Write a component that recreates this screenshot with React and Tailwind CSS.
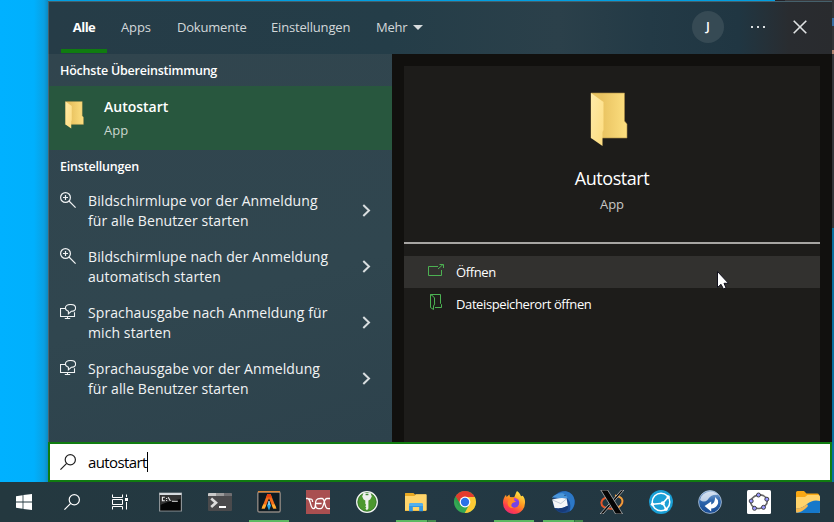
import React from "react";

const FolderIcon = ({ className }) => (
  <svg className={className} viewBox="0 0 38 55" preserveAspectRatio="none">
    <defs>
      <linearGradient id="fb" x1="0" x2="1">
        <stop offset="0.3" stopColor="#e9c361" />
        <stop offset="1" stopColor="#fddf80" />
      </linearGradient>
      <linearGradient id="ff" x1="0" x2="1" y1="0" y2="1">
        <stop offset="0" stopColor="#ffeba8" />
        <stop offset="1" stopColor="#fddc7f" />
      </linearGradient>
    </defs>
    <path d="M1 1H34.5V29L37 32V46H1Z" fill="url(#fb)" stroke="#a98a45" strokeWidth=".6" />
    <path d="M1 1L13.5 10V38L12.5 40V54L1 46Z" fill="url(#ff)" />
  </svg>
);

const ZoomIcon = () => (
  <svg className="block size-4" viewBox="0 0 16 16" fill="none" stroke="#f1f3f4" strokeWidth="1.2">
    <circle cx="5.5" cy="5.5" r="4.9" />
    <path d="M9 9L15.6 15.6M5.5 3V8M3 5.5H8" />
  </svg>
);

const NarratorIcon = () => (
  <svg className="block size-4" viewBox="0 0 16 16" fill="none" stroke="#f1f3f4" strokeWidth="1.1">
    <path d="M5 4.5H.5V12.5H14.5V8.2M7.5 12.5V14.5M4.8 14.5H10.2" />
    <path d="M8.4 9.8V7.2C6.4 6.6 5.4 5.4 5.4 4C5.4 2 7.6.5 10.5.5S15.6 2 15.6 4S13.4 7.2 11.3 7.3Z" />
  </svg>
);

const SearchIcon = ({ color, w = 1.2 }) => (
  <svg className="block size-4" viewBox="0 0 16 16" fill="none" stroke={color} strokeWidth={w}>
    <circle cx="10.3" cy="5.7" r="5.1" />
    <path d="M6.7 9.3L.4 15.6" />
  </svg>
);

const settings = [
  { icon: ZoomIcon, a: "Bildschirmlupe vor der Anmeldung", b: "für alle Benutzer starten" },
  { icon: ZoomIcon, a: "Bildschirmlupe nach der Anmeldung", b: "automatisch starten" },
  { icon: NarratorIcon, a: "Sprachausgabe nach Anmeldung für", b: "mich starten" },
  { icon: NarratorIcon, a: "Sprachausgabe vor der Anmeldung", b: "für alle Benutzer starten" },
];

const svg = (children, key) => (
  <svg key={key} className="block size-6" viewBox="0 0 24 24">{children}</svg>
);

const apps = [
  { name: "cmd", icon: svg(<>
    <rect x="0" y="2.5" width="23" height="19" fill="#8b9296" />
    <rect x=".5" y="3" width="22" height="2" fill="#d5dade" />
    <rect x="1.2" y="5" width="20.6" height="15.6" fill="#050505" />
    <path d="M1.2 5H21.8V9Q9 11 1.2 15Z" fill="#333" />
    <path d="M5.8 7.2H3.4V10.8H5.8M7.6 8V8.9M7.6 10V10.9M9.2 7.2L11.4 11M12.8 11.2H18.8" fill="none" stroke="#eee" strokeWidth="1.1" />
  </>) },
  { name: "terminal", icon: svg(<>
    <rect x="0" y="3" width="24" height="18" rx="1" fill="#4a4a4c" />
    <path d="M0 6V4Q0 3 1 3H8V6Z" fill="#c9c9c9" /><path d="M8 3H16V6H8Z" fill="#9a9a9a" /><path d="M16 3H23Q24 3 24 4V6H16Z" fill="#6f6f72" />
    <path d="M3.2 8.5L8 12.7L3.2 17" fill="none" stroke="#dcdcdc" strokeWidth="2.6" />
    <path d="M11 17H18" stroke="#fff" strokeWidth="2" />
  </>) },
  { name: "alacritty", bar: "one", icon: svg(<>
    <rect x=".8" y="2" width="22.4" height="20" rx="1.5" fill="#0e1a21" stroke="#8b8580" strokeWidth="1.4" />
    <path d="M1 1.7H23" stroke="#f08a2c" strokeWidth="1.2" />
    <path d="M10.4 4H13.6L19.4 18.5H16.2L12 8.3L7.8 18.5H4.6Z" fill="#f46d1b" />
    <path d="M10.4 4H13.6L15 7.5H9Z" fill="#e8400f" />
    <path d="M6.2 14.6L4.6 18.5H7.8L9.4 14.6ZM17.8 14.6L19.4 18.5H16.2L14.6 14.6Z" fill="#ffad32" />
    <path d="M12 10.8L14 15.5L12 20.5L10 15.5Z" fill="#25a5e8" /><path d="M12 11V15" stroke="#d7f3ff" />
  </>) },
  { name: "neo", icon: svg(<>
    <rect width="24" height="24" fill="#a94f50" />
    <path d="M0 8.5H1.5C5 8.5 4 18.7 7.6 18.7C9.3 18.7 9.3 17 9.4 14.5C9.6 10.5 10 8.5 14.5 8.5H16C19.5 8.5 18 18.7 22 18.7H24M3 8.8C6.5 8.8 6.3 9.5 6.6 12M9.5 13.5H15.6M9.4 14.5C9.6 17.5 10.5 18.7 12.5 18.7H14.5C18.5 18.7 17 8.5 21 8.5H24" fill="none" stroke="#fff" strokeWidth="1.3" />
  </>) },
  { name: "keepass", icon: svg(<>
    <circle cx="12" cy="12" r="10.2" fill="#4c982f" stroke="#f2f4f2" strokeWidth="1.5" />
    <circle cx="12" cy="12" r="9.2" fill="none" stroke="#2b6c2a" strokeWidth=".6" />
    <path d="M8.4 3H15.6L16.8 6.5L15.2 9.6L13.4 10.5V18.5L12 20.3L10.4 18.7L11.3 17.5L10.2 16.3L11.2 15L10.3 13.8V10.5L8.6 9.6L7.2 6.5Z" fill="#eef0ee" />
    <path d="M10.6 4.5H13.4" stroke="#3c8730" strokeWidth="1.4" />
  </>) },
  { name: "explorer", bar: "stack", icon: svg(<>
    <path d="M1 3.5Q1 3 1.5 3H9.5L11 4.4H22V21H1Z" fill="#e9a922" />
    <path d="M1 6H10.5L12 4.3H22Q22.7 4.3 22.7 5V20.4H1Z" fill="#ffd56b" />
    <path d="M5 21.2V15Q5 13.1 7 13.1H17Q19 13.1 19 15V21.2H15.2V17H8.8V21.2Z" fill="#3497e2" />
    <path d="M5 15Q5 13.1 7 13.1H17Q19 13.1 19 15V16H5Z" fill="#54b0ec" />
  </>) },
  { name: "chrome", icon: svg(<>
    <circle cx="12" cy="12" r="11" fill="#34a853" />
    <path d="M12 12L2.5 6.5A11 11 0 0 1 21.5 6.5Z" fill="#e33b2e" />
    <path d="M12 7H21.8A11 11 0 0 1 11.7 23L16.3 14.5Z" fill="#fcc934" />
    <path d="M2.5 6.5L7.8 14.7L12 12Z" fill="#e33b2e" /><path d="M2.5 6.5L7.6 14.5L6 17L1.5 9Z" fill="#2e9e4d" />
    <circle cx="12" cy="12" r="5.4" fill="#fff" /><circle cx="12" cy="12" r="4.2" fill="#2a72e8" />
  </>) },
  { name: "firefox", bar: "one", icon: svg(<>
    <defs><linearGradient id="fx" x1=".8" y1="0" x2=".2" y2="1"><stop offset="0" stopColor="#fff04a" /><stop offset=".45" stopColor="#ff9320" /><stop offset=".75" stopColor="#ff4048" /><stop offset="1" stopColor="#e8257c" /></linearGradient></defs>
    <path d="M15 1C18 3 18.5 5 19 6.2L20.8 5.8C22.7 8 23.2 10.3 23 13A11 11 0 0 1 1 13C.9 9.8 2 7 4 4.7L4.6 7L7.4 4.6L8 7L12 7.5C13 6 13.4 3.5 15 1Z" fill="url(#fx)" />
    <circle cx="12.2" cy="12.8" r="5" fill="#7542e5" />
    <path d="M8 8.5Q13 5.5 16.5 9.6Q13 8.4 12 10.5Q14 10.8 13.7 11.8L10.5 13Q7.5 16.5 12 18Q6 18.8 5.5 13Q6 10.2 8 8.5Z" fill="#ff8b22" />
    <path d="M12 8Q15 8 16.4 11Q14.8 9.6 12.2 10.3Z" fill="#b53be0" />
  </>) },
  { name: "thunderbird", bar: "stack", icon: svg(<>
    <circle cx="12.8" cy="12" r="11" fill="#1c4a8f" />
    <path d="M4 6Q9 .6 15 1.2Q22.8 3 23.6 10.5Q24 18 18.5 21.5Q21 13 16.5 8.5Q13 5 4 6Z" fill="#2c78c6" />
    <path d="M.8 7.8Q5 2.6 11.5 3.2Q15.5 4.5 16.5 8L9 9Q4 7 .8 7.8Z" fill="#4a96d9" />
    <path d="M1.2 9.6Q8 7.4 15.6 8.4L16.8 15.8Q10 19.5 3.6 18Z" fill="#f6f7f8" />
    <path d="M2 10.2L9.8 13.6L15.4 9" fill="none" stroke="#aebccd" strokeWidth=".8" />
    <path d="M3.6 18Q10 19.5 16.8 15.8Q18 19 14.5 21.5Q8 23.4 3.6 18Z" fill="#173a78" />
    <circle cx="14" cy="5.3" r=".6" fill="#0d2450" />
  </>) },
  { name: "xorg", icon: svg(<>
    <path d="M15 5.5Q24 7 22.2 13Q19.5 19 11 18.8Q1 18 1.4 12.5Q2 8.2 8 7" fill="none" stroke="#e6562a" strokeWidth="2" />
    <path d="M15 5.5Q24 7 22.2 13Q19.5 19 12 18.8" fill="none" stroke="#e6a83d" strokeWidth="1.5" />
    <path d="M21.5 0H24L3 24H0Z" fill="#090909" stroke="#d7d7d7" strokeWidth=".7" />
    <path d="M.8 0H7.6L22.6 24H15.6Z" fill="#050505" stroke="#ccc" strokeWidth=".7" />
  </>) },
  { name: "syncthing", icon: svg(<>
    <circle cx="12" cy="12" r="12" fill="#1a9fd5" />
    <circle cx="12" cy="12" r="8.8" fill="none" stroke="#fff" strokeWidth="1.5" />
    <path d="M3.6 14.2L13.8 13.2L19.3 7M13.8 13.2L17 19.2" fill="none" stroke="#fff" strokeWidth="1.6" />
    <circle cx="13.8" cy="13.2" r="2" fill="#fff" /><circle cx="3.5" cy="14.2" r="1.7" fill="#fff" /><circle cx="19.2" cy="7" r="1.7" fill="#fff" /><circle cx="17" cy="19.2" r="1.7" fill="#fff" />
  </>) },
  { name: "sync", icon: svg(<>
    <defs><linearGradient id="sy" x1="0" y1="0" x2="0" y2="1"><stop offset="0" stopColor="#8eb2d8" /><stop offset=".45" stopColor="#2d66ad" /><stop offset="1" stopColor="#174a93" /></linearGradient></defs>
    <circle cx="12" cy="12" r="11.4" fill="url(#sy)" stroke="#b9cce1" strokeWidth=".8" />
    <path d="M2 10Q3.5 2.5 12 1.5Q18 1.5 20 5Q13 4 9.5 10Q6 13 2 10Z" fill="#f0f4f9" opacity=".75" />
    <path d="M17 7Q21.5 10.5 19.6 14.5Q17.6 18.4 13.2 18.6V21.6L6.6 16L13.2 11.4V14.4Q17.4 13 17 7Z" fill="#fff" />
  </>) },
  { name: "geogebra", icon: svg(<>
    <rect width="24" height="24" rx="1.5" fill="#fff" />
    <ellipse cx="12" cy="11.7" rx="8.3" ry="6.7" transform="rotate(-12 12 11.7)" fill="none" stroke="#666" strokeWidth="1.6" />
    <g fill="#9999ff" stroke="#333" strokeWidth=".9"><circle cx="11.5" cy="5" r="2" /><circle cx="19.8" cy="9.2" r="2" /><circle cx="16.5" cy="17.3" r="2" /><circle cx="7.5" cy="18.3" r="2" /><circle cx="4.2" cy="11" r="2" /></g>
  </>) },
  { name: "files", icon: svg(<>
    <path d="M0 2.5Q0 1 1.5 1H8L10.5 3.5H21.5Q23 3.5 23 5V12H0Z" fill="#f8a814" />
    <path d="M0 8Q0 7 1 7H9L11.5 5H22.5Q24 5 24 6.5V21.5Q24 23 22.5 23H1.5Q0 23 0 21.5Z" fill="#ffd36b" />
    <path d="M0 18Q6 19 11 14Q17 9 24 11V21.5Q24 23 22.5 23H1.5Q0 23 0 21.5Z" fill="#1678ca" />
    <path d="M0 18Q6 19 11 14L12 16Q7 22 1 22.8Q0 22.5 0 21.5Z" fill="#f7b950" />
  </>) },
];

export default function App() {
  return (
    <div className="relative flex h-[522px] w-[834px] flex-col overflow-hidden bg-[#00b0fd] font-['Open_Sans','Noto_Sans',sans-serif]">
      <div className="flex h-[482px]">
        <div className="w-12 shrink-0 bg-[linear-gradient(to_right,#00b1ff_0,#00b0fd_34px,#0aa0e2_44px,#0c8ac2_48px)]" />
        <div className="flex w-[784px] shrink-0 flex-col">
          <div className="flex h-px">
            <div className="w-[727px] bg-[#009fe2]" />
            <div className="w-2.5 bg-[#242329]" />
            <div className="flex-1 bg-[#3a3a3d]" />
          </div>
          {/* Header */}
          <div className="flex h-[53px] border-t border-l border-[#45606b] bg-[linear-gradient(to_right,#263c47_0,#243d48_340px,#2b404a_510px,#233a46_600px,#203642_690px,#292c30_740px,#292b2e_784px)] text-[13px] text-[#d3d8da]">
            <div className="ml-3 flex h-[51px] w-[46px] items-center justify-center border-b-4 border-[#107c10] pt-1 font-bold tracking-[-0.5px] text-white">Alle</div>
            <div className="ml-3.5 flex h-[51px] items-center">
              <span className="w-14 tracking-[-0.1px]">Apps</span>
              <span className="w-[94px] tracking-[-0.2px]">Dokumente</span>
              <span className="w-[105px] tracking-[-0.17px]">Einstellungen</span>
              <span className="w-[37px] tracking-[-0.2px]">Mehr</span>
              <svg className="h-[5px] w-2.5" viewBox="0 0 10 5"><path d="M0 0H10L5 5Z" fill="#d8dcde" /></svg>
            </div>
            <div className="mt-[9px] ml-auto flex size-8 items-center justify-center rounded-full bg-[#364a54] text-[13px] font-semibold text-white">J</div>
            <div className="mt-6 ml-[27px] flex w-4 gap-1">
              <i className="size-0.5 bg-[#dce0e2]" /><i className="size-0.5 bg-[#dce0e2]" /><i className="size-0.5 bg-[#dce0e2]" />
            </div>
            <svg className="mt-[18px] mr-[25px] ml-[26px] size-3.5" viewBox="0 0 14 14"><path d="M.7.7L13.3 13.3M13.3.7L.7 13.3" stroke="#dfe2e3" strokeWidth="1.6" /></svg>
          </div>
          <div className="flex h-[388px]">
            {/* Results */}
            <div className="w-[344px] border-l border-[#4a6672] bg-[linear-gradient(165deg,#31454e,#30464f_60%,#2d424c)] text-white">
              <div className="flex h-8 items-center pt-0.5 pl-[11px] text-[12.5px] font-semibold tracking-[-0.22px]">Höchste Übereinstimmung</div>
              <div className="flex h-16 bg-[#28573e]">
                <FolderIcon className="mt-[15px] ml-4 h-7 w-[19px]" />
                <div className="ml-5 pt-[9px]">
                  <div className="text-sm leading-6 font-semibold">Autostart</div>
                  <div className="text-[13px] leading-[22px] text-[#cbd6cf]">App</div>
                </div>
              </div>
              <div className="flex h-[33px] items-center pt-0.5 pl-[11px] text-[12.5px] font-semibold tracking-[-0.2px]">Einstellungen</div>
              {settings.map(({ icon: Icon, a, b }) => (
                <div key={a} className="flex h-14 pt-2 pl-[11px]">
                  <div className="pt-[1px]"><Icon /></div>
                  <div className="ml-3 w-[274px] text-sm leading-5 tracking-[0.09px] text-[#f1f3f4]">{a}<br />{b}</div>
                  <svg className="mt-[13px] h-[13px] w-2.5" viewBox="0 0 10 13" fill="none"><path d="M1.3 1L7 6.5L1.3 12" stroke="#d8dddf" strokeWidth="2" /></svg>
                </div>
              ))}
            </div>
            {/* Details */}
            <div className="flex-1 bg-[#11100e] px-3 pt-3">
              <div className="h-[376px] bg-[#1d1c1a] text-white">
                <div className="flex h-44 flex-col items-center">
                  <FolderIcon className="mt-[26px] mr-[7px] h-[55px] w-[38px]" />
                  <div className="mt-[17px] text-[18px] leading-7 tracking-[-0.45px]">Autostart</div>
                  <div className="text-[13px] leading-6 text-[#c8c7c5]">App</div>
                </div>
                <div className="h-0.5 bg-[#a7a5a3]" />
                <div className="mt-3 flex h-8 items-center bg-[#32312f] pl-6 text-[13px]">
                  <svg className="mb-1 h-3 w-4" viewBox="0 0 16 12" fill="none" stroke="#4cb152"><path d="M10 2.5H.5V11.5H13.5V6M10 5L15 .5M11.5 .5H15.5V4" /></svg>
                  <span className="ml-3 pt-0.5 tracking-[-0.4px]">Öffnen</span>
                </div>
                <div className="flex h-8 items-center pl-[26px] text-[13px]">
                  <svg className="mb-1 h-4 w-3" viewBox="0 0 12 16" fill="none" stroke="#4cb152"><path d="M.5 .5H10.5V9.5L11.5 10.5V13.5H5M.5 .5V13.5L3.5 15.5V12Q5.3 10 4.5 8V4Q3.5 2 .5 .5" /></svg>
                  <span className="ml-3.5 pt-0.5 tracking-[-0.39px]">Dateispeicherort öffnen</span>
                </div>
              </div>
            </div>
          </div>
          {/* Search field */}
          <div className="flex h-10 items-center border-2 border-[#107c10] bg-white pl-2.5">
            <SearchIcon color="#222" />
            <span className="ml-3 text-[15px] tracking-[-0.6px] text-black">autostart</span>
            <i className="h-5 w-px bg-black" />
          </div>
        </div>
        <div className="flex w-0.5 flex-col bg-[#333438]">
          <div className="h-[18px]" /><div className="h-2 bg-[#376da3]" /><div className="h-6" /><div className="h-1 bg-[#b18370]" /><div className="h-[174px]" />
          <div className="flex-1 bg-[#08709f]" />
        </div>
      </div>
      {/* Taskbar */}
      <div className="flex h-10 bg-[linear-gradient(to_right,#24383f,#233944_50%,#22363f)]">
        <div className="flex w-12 items-center justify-center">
          <svg className="size-4" viewBox="0 0 16 16" fill="#fff"><path d="M0 2.2L6.6 1.2V7.6H0ZM7.4 1.1L16 0V7.6H7.4ZM0 8.4H6.6V14.8L0 13.8ZM7.4 8.4H16V16L7.4 14.9Z" /></svg>
        </div>
        <div className="flex w-12 items-center justify-center"><SearchIcon color="#fff" /></div>
        <div className="flex w-[50px] items-center justify-center pr-0.5">
          <svg className="size-4" viewBox="0 0 16 16" fill="none" stroke="#fff"><path d="M.5 .5V3.5H10.5V.5M.5 15.5V12.5H10.5V15.5M.5 5.5H10.5V10.5H.5ZM14.5 .5V3M14.5 8V15.5" /><rect x="13" y="4" width="3" height="3" fill="#fff" stroke="none" /></svg>
        </div>
        {apps.map((a) => (
          <div key={a.name} className="flex w-[49px] shrink-0 flex-col">
            <div className="h-[38px] pt-2 pl-[13px]">{a.icon}</div>
            {a.bar === "one" && <div className="ml-[5px] h-0.5 w-10 bg-[#5db862]" />}
            {a.bar === "stack" && <div className="ml-[5px] flex h-0.5 w-10"><div className="w-[31px] bg-[#5db862]" /><div className="w-px bg-[#2d6e42]" /><div className="w-2 bg-[#43894d]" /></div>}
          </div>
        ))}
      </div>
      {/* Mouse pointer */}
      <svg className="absolute top-[270px] left-[716px] h-5 w-[14px]" viewBox="0 0 14 20"><path d="M1.5 1.5V17.5L5 14.3L7.5 19L10 17.8L8 13.3H12.5Z" fill="#fff" stroke="#10101c" /></svg>
    </div>
  );
}
